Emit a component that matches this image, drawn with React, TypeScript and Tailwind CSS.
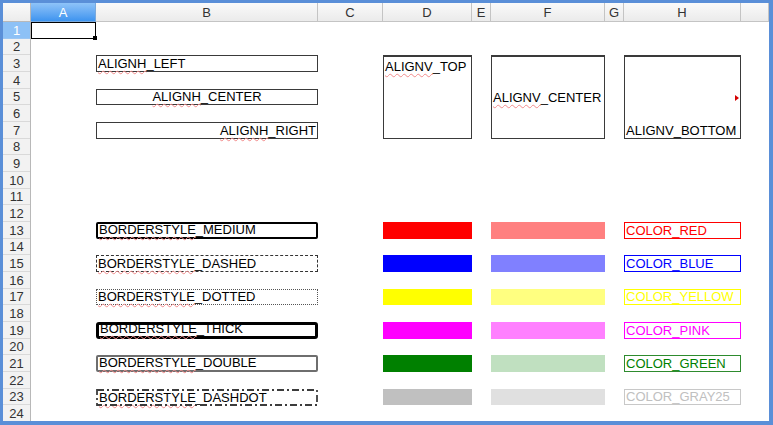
import React from 'react';

// column header strip, widths line up with the sheet grid below
const COLUMNS = [
  { name: 'A', w: 'w-[65px]', active: true },
  { name: 'B', w: 'w-[222px]' },
  { name: 'C', w: 'w-[65px]' },
  { name: 'D', w: 'w-[89px]' },
  { name: 'E', w: 'w-[19px]' },
  { name: 'F', w: 'w-[114px]' },
  { name: 'G', w: 'w-[19px]' },
  { name: 'H', w: 'w-[117px]' },
  { name: '', w: 'w-[28px]' },
];

const ROWS = Array.from({ length: 24 }, (_, i) => i + 1);

// word flagged by the spell checker, followed by the rest of the label
const Flagged = ({ word, rest }: { word: string; rest: string }) => (
  <span className="whitespace-nowrap">
    <span className="underline decoration-wavy decoration-[#f28b8b] decoration-1 underline-offset-[2px]">
      {word}
    </span>
    {rest}
  </span>
);

type Cell = {
  at: string;
  cls: string;
  text?: React.ReactNode;
  extra?: React.ReactNode;
};

const CELLS: Cell[] = [
  // horizontal alignment
  {
    at: 'col-start-2 row-start-3',
    cls: 'border border-[#3a3a3a] justify-start items-end',
    text: <Flagged word="ALIGNH" rest="_LEFT" />,
  },
  {
    at: 'col-start-2 row-start-5',
    cls: 'border border-[#3a3a3a] justify-center items-end',
    text: <Flagged word="ALIGNH" rest="_CENTER" />,
  },
  {
    at: 'col-start-2 row-start-7',
    cls: 'border border-[#3a3a3a] justify-end items-end',
    text: <Flagged word="ALIGNH" rest="_RIGHT" />,
  },
  // vertical alignment, merged over rows 3-7
  {
    at: 'col-start-4 row-start-3 row-span-5',
    cls: 'border border-[#3a3a3a] border-t-2 justify-start items-start pt-[2px]',
    text: <Flagged word="ALIGNV" rest="_TOP" />,
  },
  {
    at: 'col-start-6 row-start-3 row-span-5',
    cls: 'border border-[#3a3a3a] border-t-2 justify-start items-center',
    text: <Flagged word="ALIGNV" rest="_CENTER" />,
  },
  {
    at: 'col-start-8 row-start-3 row-span-5',
    cls: 'border border-[#3a3a3a] border-t-2 justify-start items-end overflow-hidden',
    text: <Flagged word="ALIGNV" rest="_BOTTOM" />,
    extra: (
      <span className="absolute right-[1px] top-[38px] h-0 w-0 border-y-[3px] border-l-[4px] border-y-transparent border-l-[#d40000]" />
    ),
  },
  // border styles
  {
    at: 'col-start-2 row-start-13',
    cls: 'border-2 border-black rounded-[2px] items-end',
    text: <Flagged word="BORDERSTYLE" rest="_MEDIUM" />,
  },
  {
    at: 'col-start-2 row-start-15',
    cls: 'border border-dashed border-[#333] items-end',
    text: <Flagged word="BORDERSTYLE" rest="_DASHED" />,
  },
  {
    at: 'col-start-2 row-start-17',
    cls: 'border border-dotted border-[#555] items-end',
    text: <Flagged word="BORDERSTYLE" rest="_DOTTED" />,
  },
  {
    at: 'col-start-2 row-start-19',
    cls: 'border-[3px] border-black rounded-[3px] items-end',
    text: <Flagged word="BORDERSTYLE" rest="_THICK" />,
  },
  {
    at: 'col-start-2 row-start-21',
    cls: 'border-2 border-[#6e6e6e] rounded-[2px] items-end',
    text: <Flagged word="BORDERSTYLE" rest="_DOUBLE" />,
  },
  {
    at: 'col-start-2 row-start-23',
    cls: 'items-end pl-[3px]',
    text: <Flagged word="BORDERSTYLE" rest="_DASHDOT" />,
    extra: (
      <svg className="absolute inset-0" width="222" height="17">
        <rect
          x="1"
          y="1"
          width="220"
          height="15"
          fill="none"
          stroke="#3c3c3c"
          strokeWidth="1.8"
          strokeDasharray="7 3 2 3"
        />
      </svg>
    ),
  },
  // solid colours
  { at: 'col-start-4 row-start-13', cls: 'bg-[#ff0000]' },
  { at: 'col-start-4 row-start-15', cls: 'bg-[#0000ff]' },
  { at: 'col-start-4 row-start-17', cls: 'bg-[#ffff00]' },
  { at: 'col-start-4 row-start-19', cls: 'bg-[#ff00ff]' },
  { at: 'col-start-4 row-start-21', cls: 'bg-[#008000]' },
  { at: 'col-start-4 row-start-23', cls: 'bg-[#c0c0c0]' },
  // tints
  { at: 'col-start-6 row-start-13', cls: 'bg-[#ff8080]' },
  { at: 'col-start-6 row-start-15', cls: 'bg-[#8080ff]' },
  { at: 'col-start-6 row-start-17', cls: 'bg-[#ffff80]' },
  { at: 'col-start-6 row-start-19', cls: 'bg-[#ff80ff]' },
  { at: 'col-start-6 row-start-21', cls: 'bg-[#c0e0c0]' },
  { at: 'col-start-6 row-start-23', cls: 'bg-[#e0e0e0]' },
  // coloured text + border
  { at: 'col-start-8 row-start-13', cls: 'border border-[#ff0000] text-[#ff0000] items-end', text: 'COLOR_RED' },
  { at: 'col-start-8 row-start-15', cls: 'border border-[#0000ff] text-[#0000ff] items-end', text: 'COLOR_BLUE' },
  { at: 'col-start-8 row-start-17', cls: 'border border-[#ffff00] text-[#ffff00] items-end', text: 'COLOR_YELLOW' },
  { at: 'col-start-8 row-start-19', cls: 'border border-[#ff00ff] text-[#ff00ff] items-end', text: 'COLOR_PINK' },
  { at: 'col-start-8 row-start-21', cls: 'border border-[#2e8b2e] text-[#008000] items-end', text: 'COLOR_GREEN' },
  { at: 'col-start-8 row-start-23', cls: 'border border-[#c8c8c8] text-[#c0c0c0] items-end', text: 'COLOR_GRAY25' },
];

export default function App() {
  return (
    <div className="h-[425px] w-[773px] bg-[#5a8fd8] pb-[4px] pl-[3px] pr-[4px] pt-[3px] font-['Liberation_Sans',Arial,sans-serif] text-[13px] leading-[15px] text-black">
      <div className="flex h-full w-full flex-col overflow-hidden bg-white">
        {/* column headers */}
        <div className="flex h-[19px] shrink-0">
          <div className="h-full w-[28px] border-b border-r border-[#b8b8b8] bg-linear-to-b from-[#fafafa] to-[#ececec]" />
          {COLUMNS.map((c) => (
            <div
              key={c.name || 'end'}
              className={
                c.active
                  ? `${c.w} flex h-full items-center justify-center border-b border-r border-[#7aa9dc] bg-linear-to-b from-[#8ec3f8] to-[#3d94ef] text-white`
                  : `${c.w} flex h-full items-center justify-center border-b border-r border-[#c4c4c4] bg-linear-to-b from-[#fafafa] to-[#ebebeb] text-[#333]`
              }
            >
              {c.name}
            </div>
          ))}
        </div>

        <div className="flex min-h-0 flex-1">
          {/* row numbers */}
          <div className="grid w-[28px] shrink-0 grid-rows-[repeat(8,17px_16px_17px)] border-r border-[#b8b8b8]">
            {ROWS.map((r) => (
              <div
                key={r}
                className={
                  r === 1
                    ? 'flex items-center justify-center border-b border-[#9cc6f2] bg-[#8dc1f6] text-white'
                    : 'flex items-center justify-center border-b border-[#d9d9d9] bg-[#f2f2f2] text-[#333]'
                }
              >
                {r}
              </div>
            ))}
          </div>

          {/* sheet body */}
          <div className="grid flex-1 grid-cols-[65px_222px_65px_89px_19px_114px_19px_117px_28px] grid-rows-[repeat(8,17px_16px_17px)]">
            <div className="relative col-start-1 row-start-1 border border-black">
              <span className="absolute -bottom-[2px] -right-[2px] h-[4px] w-[4px] bg-black" />
            </div>
            {CELLS.map((c) => (
              <div key={c.at} className={`${c.at} ${c.cls} relative flex px-[1px]`}>
                {c.text}
                {c.extra}
              </div>
            ))}
          </div>
        </div>
      </div>
    </div>
  );
}
